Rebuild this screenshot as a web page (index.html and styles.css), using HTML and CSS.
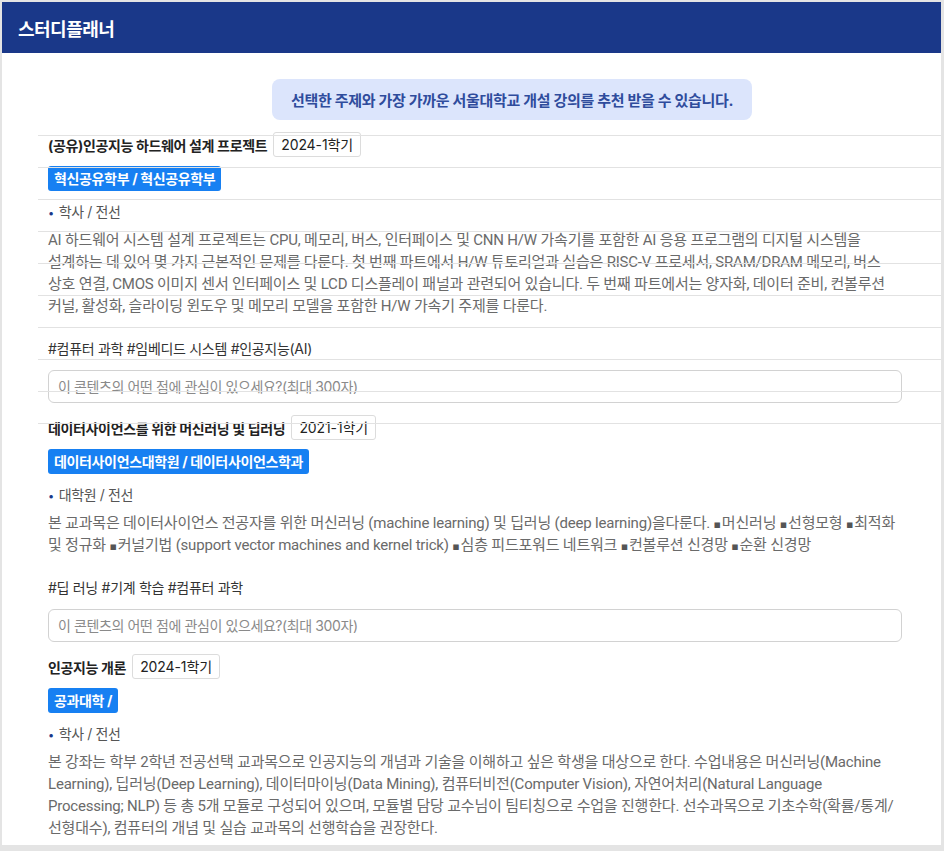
FILE: index.html
```html
<!DOCTYPE html>
<html lang="ko">
<head>
    <meta charset="UTF-8">
    <meta name="viewport" content="width=device-width, initial-scale=1.0">
    <title>스터디플래너</title>
    <link rel="stylesheet" href="styles.css">
</head>
<body>
    <div class="app">
        <header class="topbar">
            <h1>스터디플래너</h1>
        </header>

        <main class="content">
            <div class="notice-row">
                <div class="notice">선택한 주제와 가장 가까운 서울대학교 개설 강의를 추천 받을 수 있습니다.</div>
            </div>

            <section class="course">
                <div class="course-head">
                    <span class="course-title">(공유)인공지능 하드웨어 설계 프로젝트</span>
                    <span class="term">2024-1학기</span>
                </div>
                <div class="dept">혁신공유학부 / 혁신공유학부</div>
                <div class="level"><span class="dot">•</span>학사 / 전선</div>
                <p class="desc">AI 하드웨어 시스템 설계 프로젝트는 CPU, 메모리, 버스, 인터페이스 및 CNN H/W 가속기를 포함한 AI 응용 프로그램의 디지털 시스템을 설계하는 데 있어 몇 가지 근본적인 문제를 다룬다. 첫 번째 파트에서 H/W 튜토리얼과 실습은 RISC-V 프로세서, SRAM/DRAM 메모리, 버스 상호 연결, CMOS 이미지 센서 인터페이스 및 LCD 디스플레이 패널과 관련되어 있습니다. 두 번째 파트에서는 양자화, 데이터 준비, 컨볼루션 커널, 활성화, 슬라이딩 윈도우 및 메모리 모델을 포함한 H/W 가속기 주제를 다룬다.</p>
                <div class="tags">#컴퓨터 과학 #임베디드 시스템 #인공지능(AI)</div>
                <input class="memo" type="text" placeholder="이 콘텐츠의 어떤 점에 관심이 있으세요?(최대 300자)">
            </section>

            <section class="course">
                <div class="course-head">
                    <span class="course-title">데이터사이언스를 위한 머신러닝 및 딥러닝</span>
                    <span class="term">2021-1학기</span>
                </div>
                <div class="dept">데이터사이언스대학원 / 데이터사이언스학과</div>
                <div class="level"><span class="dot">•</span>대학원 / 전선</div>
                <p class="desc">본 교과목은 데이터사이언스 전공자를 위한 머신러닝 (machine learning) 및 딥러닝 (deep learning)을다룬다. <span class="item"><span class="sq">▪</span>머신러닝</span> <span class="item"><span class="sq">▪</span>선형모형</span> <span class="item"><span class="sq">▪</span>최적화</span> 및 정규화 <span class="item"><span class="sq">▪</span>커널기법</span> (support vector machines and kernel trick) <span class="item"><span class="sq">▪</span>심층</span> 피드포워드 네트워크 <span class="item"><span class="sq">▪</span>컨볼루션</span> 신경망 <span class="item"><span class="sq">▪</span>순환</span> 신경망</p>
                <div class="tags">#딥 러닝 #기계 학습 #컴퓨터 과학</div>
                <input class="memo" type="text" placeholder="이 콘텐츠의 어떤 점에 관심이 있으세요?(최대 300자)">
            </section>

            <section class="course">
                <div class="course-head">
                    <span class="course-title">인공지능 개론</span>
                    <span class="term">2024-1학기</span>
                </div>
                <div class="dept">공과대학 /</div>
                <div class="level"><span class="dot">•</span>학사 / 전선</div>
                <p class="desc">본 강좌는 학부 2학년 전공선택 교과목으로 인공지능의 개념과 기술을 이해하고 싶은 학생을 대상으로 한다. 수업내용은 머신러닝(Machine Learning), 딥러닝(Deep Learning), 데이터마이닝(Data Mining), 컴퓨터비전(Computer Vision), 자연어처리(Natural Language Processing; NLP) 등 총 5개 모듈로 구성되어 있으며, 모듈별 담당 교수님이 팀티칭으로 수업을 진행한다. 선수과목으로 기초수학(확률/통계/선형대수), 컴퓨터의 개념 및 실습 교과목의 선행학습을 권장한다.</p>
            </section>
        </main>

        <div class="row-lines"></div>
    </div>
</body>
</html>
```

FILE: styles.css
```css
html, body {
    margin: 0;
    padding: 0;
}
body {
    background-color: #e4e4e4;
    font-family: Inter, "Noto Sans CJK KR", sans-serif;
    padding: 2px 3px 0 2px;
}
.app {
    position: relative;
    background: #ffffff;
    height: 843px;
    overflow: hidden;
}
.topbar {
    background-color: #1a3889;
    height: 51px;
    display: flex;
    align-items: center;
    padding-left: 16px;
}
.topbar h1 {
    margin: 0;
    color: #ffffff;
    font-size: 18px;
    font-weight: 700;
    letter-spacing: -0.5px;
}
.content {
    padding: 0 39px 0 46px;
}
.notice-row {
    display: flex;
    padding-left: 224px;
    margin-top: 26px;
}
.notice {
    width: 480px;
    height: 41px;
    box-sizing: border-box;
    background-color: #dce5fc;
    border-radius: 8px;
    color: #2f4c9c;
    font-size: 15px;
    font-weight: 700;
    letter-spacing: -0.3px;
    display: flex;
    align-items: center;
    justify-content: center;
}
.course {
    margin-top: 12px;
}
.course-head {
    display: flex;
    align-items: center;
    gap: 6px;
}
.course-title {
    font-size: 14px;
    font-weight: 700;
    color: #222222;
    letter-spacing: -0.35px;
}
.term {
    height: 25px;
    box-sizing: border-box;
    line-height: 23px;
    padding: 0 7px;
    border: 1px solid #dcdcdc;
    border-radius: 3px;
    font-size: 14px;
    color: #222222;
    letter-spacing: -0.1px;
}
.dept {
    display: inline-block;
    margin-top: 9px;
    height: 25px;
    line-height: 25px;
    padding: 0 6px;
    background-color: #1780f2;
    border-radius: 3px;
    color: #ffffff;
    font-size: 14px;
    font-weight: 700;
    letter-spacing: -0.35px;
}
.level {
    margin-top: 11px;
    height: 20px;
    line-height: 20px;
    font-size: 14px;
    color: #555555;
    letter-spacing: -0.4px;
}
.dot {
    color: #1a3889;
    font-size: 11px;
    margin-right: 5px;
}
.desc {
    margin: 7px 0 0;
    max-width: 851px;
    font-family: Roboto, "Noto Sans CJK KR", sans-serif;
    font-size: 15px;
    line-height: 22px;
    color: #6a6a6a;
    letter-spacing: -0.2px;
    word-break: keep-all;
}
.item {
    white-space: nowrap;
}
.sq {
    font-family: "DejaVu Sans", sans-serif;
    font-size: 11px;
    line-height: 1;
    color: #555555;
    margin-right: 1px;
}
.tags {
    margin-top: 22px;
    height: 20px;
    line-height: 20px;
    font-size: 14px;
    color: #333333;
    letter-spacing: -0.3px;
}
.memo {
    display: block;
    margin-top: 11px;
    width: 100%;
    height: 33px;
    box-sizing: border-box;
    border: 1px solid #d2d2d2;
    border-radius: 6px;
    padding: 0 9px;
    font-family: inherit;
    font-size: 14px;
    letter-spacing: -0.4px;
    outline: none;
}
.memo::placeholder {
    color: #8a8a8a;
}
.row-lines {
    position: absolute;
    top: 133px;
    left: 36px;
    right: 0;
    height: 290px;
    background: repeating-linear-gradient(to bottom, #e2e2e2 0, #e2e2e2 1px, transparent 1px, transparent 32px);
    pointer-events: none;
}
```
